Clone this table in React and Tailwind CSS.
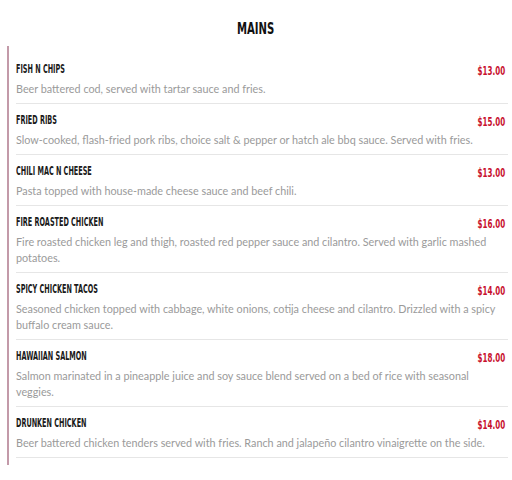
import React from "react";

const items = [
  { name: "Fish N Chips", price: "$13.00", text: "Beer battered cod, served with tartar sauce and fries." },
  {
    name: "Fried Ribs",
    price: "$15.00",
    text: "Slow-cooked, flash-fried pork ribs, choice salt & pepper or hatch ale bbq sauce. Served with fries.",
  },
  { name: "Chili Mac N Cheese", price: "$13.00", text: "Pasta topped with house-made cheese sauce and beef chili." },
  {
    name: "Fire Roasted Chicken",
    price: "$16.00",
    text: "Fire roasted chicken leg and thigh, roasted red pepper sauce and cilantro. Served with garlic mashed potatoes.",
  },
  {
    name: "Spicy Chicken Tacos",
    price: "$14.00",
    text: "Seasoned chicken topped with cabbage, white onions, cotija cheese and cilantro. Drizzled with a spicy buffalo cream sauce.",
  },
  {
    name: "Hawaiian Salmon",
    price: "$18.00",
    text: "Salmon marinated in a pineapple juice and soy sauce blend served on a bed of rice with seasonal veggies.",
  },
  {
    name: "Drunken Chicken",
    price: "$14.00",
    text: "Beer battered chicken tenders served with fries. Ranch and jalapeño cilantro vinaigrette on the side.",
  },
];

// condensed display type for headings / prices
const condensed = "font-['DejaVu_Sans_Condensed','Liberation_Sans',sans-serif] font-bold uppercase";

export default function App() {
  return (
    <div className="w-[512px] h-[480px] bg-white overflow-hidden">
      {/* heading */}
      <div className="pt-[16px] h-[46px] text-center">
        <h2 className={`${condensed} inline-block scale-x-[0.7] text-[16px] leading-[20px] text-[#111]`}>Mains</h2>
      </div>

      {/* list with left rule */}
      <div className="ml-[7px] mr-[4px] border-l-2 border-[#c39aa9] pl-[7px] pt-[7px] pb-[7px]">
        {items.map((it) => (
          <div key={it.name} className="border-b border-[#e6e6e6] pt-[7px] pb-[6px]">
            <div className="flex items-start justify-between h-[21px] leading-[18px]">
              <span className={`${condensed} inline-block origin-left scale-x-[0.555] text-[13px] text-[#1a1a1a] whitespace-nowrap`}>
                {it.name}
              </span>
              <span className={`${condensed} inline-block origin-right scale-x-[0.61] mt-[2px] mr-[3px] text-[13px] text-[#c8102e]`}>
                {it.price}
              </span>
            </div>
            <p className="font-['Lato',sans-serif] text-[10.8px] leading-[16px] text-[#9a9a9a] pr-[2px]">{it.text}</p>
          </div>
        ))}
      </div>
    </div>
  );
}
